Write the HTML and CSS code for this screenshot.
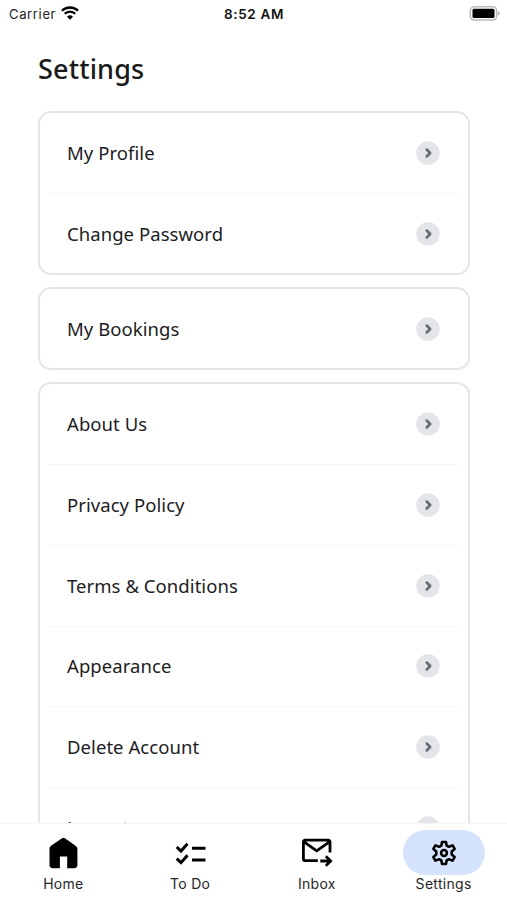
FILE: index.html
```html
<!DOCTYPE html>
<html lang="en">
<head>
<meta charset="utf-8">
<title>Settings</title>
<link rel="stylesheet" href="styles.css">
</head>
<body>
<svg width="0" height="0" class="defs">
  <symbol id="chevron" viewBox="0 0 24 24">
    <circle cx="12" cy="12" r="11.8" fill="#e3e5e8"/>
    <path d="M10.700 8.500 14.200 12l-3.500 3.500" fill="none" stroke="#656c75" stroke-width="2.500" stroke-linecap="round" stroke-linejoin="round"/>
  </symbol>
</svg>
<div class="screen">
  <header class="status">
    <div class="carrier"><span>Carrier</span>
      <svg width="18" height="14" viewBox="0 0 18 14" fill="none" stroke="#000" stroke-width="2.3">
        <path d="M.9 4.8a11.6 11.6 0 0 1 16.2 0M3.7 7.8a7.5 7.5 0 0 1 10.6 0"/>
        <path d="M9 13.7 6 10.7a4.3 4.3 0 0 1 6 0Z" fill="#000" stroke="none"/>
      </svg>
    </div>
    <div class="time">8:52 AM</div>
    <div class="battery">
      <svg width="31" height="15" viewBox="0 0 31 15">
        <rect x="1.300" y=".8" width="26.4" height="13.2" rx="4" fill="#fff" stroke="#b9b9b9" stroke-width="1.600"/>
        <rect x="3.500" y="2.8" width="22" height="9.2" rx="1.5" fill="#000"/>
        <path d="M29.200 5.2c2 .8 2 3.600 0 4.400Z" fill="#aaa"/>
      </svg>
    </div>
  </header>
  <main class="content">
    <h1>Settings</h1>
    <section class="card">
      <div class="row"><span>My Profile</span><svg class="go"><use href="#chevron"/></svg></div>
      <div class="row"><span>Change Password</span><svg class="go"><use href="#chevron"/></svg></div>
    </section>
    <section class="card">
      <div class="row"><span>My Bookings</span><svg class="go"><use href="#chevron"/></svg></div>
    </section>
    <section class="card">
      <div class="row"><span>About Us</span><svg class="go"><use href="#chevron"/></svg></div>
      <div class="row"><span>Privacy Policy</span><svg class="go"><use href="#chevron"/></svg></div>
      <div class="row"><span>Terms &amp; Conditions</span><svg class="go"><use href="#chevron"/></svg></div>
      <div class="row"><span>Appearance</span><svg class="go"><use href="#chevron"/></svg></div>
      <div class="row"><span>Delete Account</span><svg class="go"><use href="#chevron"/></svg></div>
      <div class="row"><span>Logout</span><svg class="go"><use href="#chevron"/></svg></div>
    </section>
  </main>
  <nav class="tabs">
    <a class="tab"><span class="pill">
      <svg width="32" height="32" viewBox="0 0 32 32"><path d="M14.700 1.400a3 3 0 0 1 3.600 0l10.200 7.400A3.400 3.400 0 0 1 30.400 11.600v16.200a3.400 3.400 0 0 1-3.400 3.400h-6.800V19.600h-7.300v11.600H5.900a3.400 3.400 0 0 1-3.400-3.400V11.600a3.400 3.400 0 0 1 1.500-2.800Z"/></svg>
    </span><span class="label">Home</span></a>
    <a class="tab"><span class="pill">
      <svg width="32" height="32" viewBox="0 0 32 32" fill="none" stroke="#000" stroke-width="3"><path d="m2.700 10 4.300 4L13.500 6.700M2.700 21.700l4.300 4 6.500-7.400M18 11.300h13.500M18 23h13.500"/></svg>
    </span><span class="label">To Do</span></a>
    <a class="tab"><span class="pill">
      <svg width="32" height="32" viewBox="0 0 32 32" fill="none" stroke="#000" stroke-width="2.800" stroke-linejoin="round"><path d="M16.800 23.700H4a1.600 1.600 0 0 1-1.600-1.600V4.800a1.600 1.600 0 0 1 1.600-1.600h23.400A1.600 1.600 0 0 1 29 4.800v10.700M3 4.800l12.700 9 12.700-9M19.300 24h10.200"/><path d="m24.800 19.200 4.800 4.800-4.800 4.700" stroke-linejoin="miter"/></svg>
    </span><span class="label">Inbox</span></a>
    <a class="tab active"><span class="pill">
      <svg width="28" height="28" viewBox="0 0 24 24" fill="none" stroke="#000" stroke-width="2.200" stroke-linejoin="round"><path d="M10.300 2.500h3.400l.6 3.200 1.800 1 3.300-1.200 1.700 3-2.500 2.200v2.600l2.500 2.200-1.700 3-3.300-1.200-1.800 1-.6 3.200h-3.400l-.6-3.200-1.800-1-3.300 1.200-1.700-3 2.500-2.200v-2.600l-2.500-2.200 1.700-3 3.300 1.200 1.800-1Z"/><circle cx="12" cy="12" r="2.500"/></svg>
    </span><span class="label">Settings</span></a>
  </nav>
</div>
</body>
</html>
```
FILE: styles.css
```css
* { box-sizing: border-box; }
body { margin: 0; background: #fff; color: #252628; }
.defs { display: block; }
.screen { width: 507px; height: 900px; display: flex; flex-direction: column; overflow: hidden; }
.status {
  height: 27px; flex: none; padding: 0 7px 0 9px;
  display: grid; grid-template-columns: 1fr auto 1fr; align-items: center;
  font-family: Inter, sans-serif; font-size: 13px; color: #222;
}
.carrier { display: flex; align-items: center; gap: 5px; letter-spacing: .65px; }
.carrier svg { margin-bottom: 2px; }
.time { font-size: 13.5px; font-weight: 600; letter-spacing: .65px; color: #111; margin-right: 1px; }
.battery { display: flex; justify-content: flex-end; }
.content {
  flex: 1; min-height: 0; overflow: hidden; padding: 23px 37px 0 38px;
  font-family: "Noto Sans", sans-serif;
}
h1 { margin: 0 0 23px; font-size: 27px; line-height: 38px; font-weight: 500; letter-spacing: .15px; color: #1a1a1a; }
.card { border: 2px solid #e5e5e5; border-radius: 13px; padding: 0 8px 0 9px; margin-bottom: 12px; }
.row {
  height: 80.6px; padding: 0 20px 0 18px; display: flex;
  align-items: center; justify-content: space-between;
  font-size: 18.5px; font-weight: 400; letter-spacing: .06px; color: #1c1c1e;
}
.row span { padding-bottom: 1px; }
.row:first-child { margin-top: -.6px; }
.row:last-child { margin-bottom: -.6px; }
.row + .row { border-top: 1px solid #f5f5f5; }
.go { width: 24px; height: 24px; }
.tabs {
  flex: none; height: 77px; border-top: 1px solid #f6f6f6; background: #fff;
  display: grid; grid-template-columns: repeat(4, 1fr); padding-top: 6px;
}
.tab { display: flex; flex-direction: column; align-items: center; }
.pill { width: 82px; height: 45px; border-radius: 23px; display: flex; align-items: center; justify-content: center; }
.active .pill { background: #d5e3fe; }
.label { font: 400 14px/18px Inter, sans-serif; letter-spacing: .3px; }
```
